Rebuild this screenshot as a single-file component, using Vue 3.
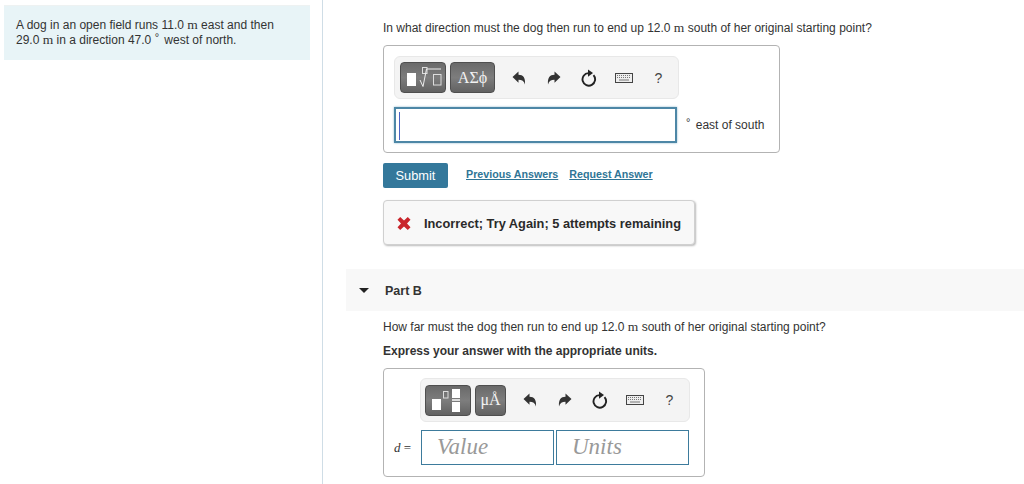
<script setup>
const iconBtns = ['undo', 'redo', 'reset', 'keyboard', 'help']
</script>

<template>
  <div class="page">
    <aside class="side">
      <div class="intro">
        A dog in an open field runs 11.0 <span class="unit">m</span> east and then<br />
        29.0 <span class="unit">m</span> in a direction 47.0 <sup class="deg">°</sup> west of north.
      </div>
    </aside>

    <main class="main">
      <div class="part">
        <p class="question first">
          In what direction must the dog then run to end up 12.0 <span class="unit">m</span> south of her original starting point?
        </p>

        <div class="answer-box box-a">
          <div class="toolbar">
            <button class="tpl tpl-a" aria-label="Templates">
              <svg width="46" height="31" viewBox="0 0 46 31">
                <rect x="7" y="11" width="9" height="13" fill="#fff" />
                <rect x="22.500" y="5.500" width="4.500" height="6" fill="none" stroke="#ddd" stroke-width="1" />
                <path d="M20 18l3 6.500 3.500-17.500h14.500" fill="none" stroke="#eee" stroke-width="1" />
                <rect x="33.500" y="12.500" width="7.500" height="10.500" fill="none" stroke="#ddd" stroke-width="1" />
              </svg>
            </button>
            <button class="tpl tpl-b">ΑΣϕ</button>
            <div class="tools">
              <span v-for="b in iconBtns" :key="b" class="tool">
                <svg v-if="b === 'undo'" width="14" height="14" viewBox="0 0 14 14">
                  <path d="M.5 6L6.500.5v3.300c4.800 0 7 3 6.500 9.700-1-3.400-3-4.800-6.500-4.800v3z" fill="#333" />
                </svg>
                <svg v-else-if="b === 'redo'" width="14" height="14" viewBox="0 0 14 14">
                  <path d="M13.500 6L7.500.5v3.300c-4.800 0-7 3-6.500 9.700 1-3.400 3-4.800 6.500-4.800v3z" fill="#333" />
                </svg>
                <svg v-else-if="b === 'reset'" width="16" height="18" viewBox="0 0 16 18">
                  <path d="M12.500 6.200a6.300 6.300 0 1 1-5-2.100" fill="none" stroke="#222" stroke-width="1.900" />
                  <path d="M7 .5v7.200l5-3.800z" fill="#222" />
                </svg>
                <svg v-else-if="b === 'keyboard'" width="18" height="10" viewBox="0 0 18 10">
                  <rect x="0.500" y="0.500" width="17" height="9" fill="#eee" stroke="#444" />
                  <path d="M2 2.500h14M2 4.500h14" stroke="#777" stroke-dasharray="1 1" />
                  <path d="M4 7h10" stroke="#777" />
                </svg>
                <span v-else class="help">?</span>
              </span>
            </div>
          </div>
          <div class="input-row">
            <div class="math-input"><span class="caret"></span></div>
            <span class="suffix"><sup class="deg">°</sup> east of south</span>
          </div>
        </div>

        <div class="actions">
          <button class="submit">Submit</button>
          <a class="link">Previous Answers</a>
          <a class="link">Request Answer</a>
        </div>

        <div class="feedback">
          <svg width="14" height="13" viewBox="0 0 14 13">
            <path d="M.5 2.800L3.200 0 7 3.600 10.800 0l2.700 2.800L10 6.500l3.500 3.700-2.700 2.800L7 9.400 3.200 13 .5 10.200 4 6.500z" fill="#c9252b" />
          </svg>
          <span>Incorrect; Try Again; 5 attempts remaining</span>
        </div>
      </div>

      <div class="part-head">
        <span class="caret-down"></span>
        <span class="part-title">Part B</span>
      </div>

      <div class="part">
        <p class="question second">
          How far must the dog then run to end up 12.0 <span class="unit">m</span> south of her original starting point?
        </p>
        <p class="hint">Express your answer with the appropriate units.</p>

        <div class="answer-box box-b">
          <div class="toolbar toolbar-b">
            <button class="tpl tpl-a" aria-label="Templates">
              <svg width="46" height="31" viewBox="0 0 46 31">
                <rect x="7" y="14" width="9" height="11" fill="#fff" />
                <rect x="18.500" y="6.500" width="4.500" height="6.500" fill="none" stroke="#ddd" stroke-width="1" />
                <rect x="27" y="4" width="8" height="9" fill="#fff" />
                <rect x="27" y="14" width="8" height="2" fill="#ddd" />
                <rect x="27" y="17" width="8" height="10" fill="#fff" />
              </svg>
            </button>
            <button class="tpl tpl-c">μÅ</button>
            <div class="tools">
              <span v-for="b in iconBtns" :key="b" class="tool">
                <svg v-if="b === 'undo'" width="14" height="14" viewBox="0 0 14 14">
                  <path d="M.5 6L6.500.5v3.300c4.800 0 7 3 6.500 9.700-1-3.400-3-4.800-6.500-4.800v3z" fill="#333" />
                </svg>
                <svg v-else-if="b === 'redo'" width="14" height="14" viewBox="0 0 14 14">
                  <path d="M13.500 6L7.500.5v3.300c-4.800 0-7 3-6.500 9.700 1-3.400 3-4.800 6.500-4.800v3z" fill="#333" />
                </svg>
                <svg v-else-if="b === 'reset'" width="16" height="18" viewBox="0 0 16 18">
                  <path d="M12.500 6.200a6.300 6.300 0 1 1-5-2.100" fill="none" stroke="#222" stroke-width="1.900" />
                  <path d="M7 .5v7.200l5-3.800z" fill="#222" />
                </svg>
                <svg v-else-if="b === 'keyboard'" width="18" height="10" viewBox="0 0 18 10">
                  <rect x="0.500" y="0.500" width="17" height="9" fill="#eee" stroke="#444" />
                  <path d="M2 2.500h14M2 4.500h14" stroke="#777" stroke-dasharray="1 1" />
                  <path d="M4 7h10" stroke="#777" />
                </svg>
                <span v-else class="help">?</span>
              </span>
            </div>
          </div>
          <div class="units-row">
            <span class="var"><i>d</i> =</span>
            <div class="field">Value</div>
            <div class="field">Units</div>
          </div>
        </div>
      </div>
    </main>
  </div>
</template>

<style>
html, body {
  margin: 0;
  background: #fff;
  overflow: hidden;
}
</style>

<style scoped>
.page {
  display: flex;
  width: 1024px;
  height: 484px;
  overflow: hidden;
  font-family: "Liberation Sans", Arial, sans-serif;
  color: #333;
}

.side {
  flex: none;
  box-sizing: border-box;
  width: 323px;
  padding: 5px 0 0 4px;
  border-right: 1px solid #cfdde6;
}

.intro {
  box-sizing: border-box;
  width: 306px;
  height: 55px;
  padding: 12px 12px 0;
  background: #e8f4f7;
  border-top: 1px solid #eef2f2;
  font-size: 12px;
  line-height: 15px;
}

.unit {
  font-family: "Liberation Serif", serif;
  font-size: 13.500px;
  line-height: 0;
}

.deg {
  font-size: 11px;
  line-height: 0;
  vertical-align: 3px;
  margin-right: 2px;
}

.main {
  flex: 1;
  min-width: 0;
  padding-left: 23px;
}

.part {
  padding-left: 37px;
}

.question {
  margin: 0;
  font-size: 12px;
  line-height: 16px;
}

.first {
  padding-top: 20px;
}

.second {
  padding-top: 8px;
}

.hint {
  margin: 8px 0 0;
  font-size: 12px;
  line-height: 16px;
  font-weight: bold;
}

.answer-box {
  box-sizing: border-box;
  border: 1px solid #b3b3b3;
  border-radius: 4px;
  height: 108px;
}

.box-a {
  width: 397px;
  margin-top: 9px;
  padding: 10px 0 0 10px;
}

.box-b {
  width: 322px;
  height: 109px;
  margin-top: 9px;
  padding: 9px 0 0 10px;
}

.toolbar {
  box-sizing: border-box;
  display: flex;
  align-items: center;
  gap: 4px;
  width: 285px;
  height: 43px;
  padding-left: 5px;
  background: #f4f4f4;
  border: 1px solid #e8e8e8;
  border-radius: 6px;
}

.toolbar-b {
  width: 270px;
  height: 44px;
  margin-left: 26px;
  padding-left: 4px;
}

.tpl {
  flex: none;
  height: 31px;
  padding: 0;
  border: 1px solid #4f4f4f;
  border-radius: 4px;
  background: linear-gradient(#6a6a6a, #7d7d7d 50%, #626262);
  color: #f2f2f2;
  font-family: "Liberation Serif", serif;
  font-size: 16px;
  display: flex;
  align-items: center;
  justify-content: center;
}

.tpl svg {
  flex: none;
}

.tpl-a {
  width: 46px;
}

.tpl-b {
  width: 45px;
}

.tpl-c {
  width: 31px;
}

.tools {
  display: flex;
  margin-left: 2px;
}

.tool {
  flex: none;
  display: flex;
  width: 35px;
  height: 24px;
  align-items: center;
  justify-content: center;
}

.help {
  font-size: 14px;
  color: #444;
}

.input-row {
  display: flex;
  align-items: center;
  margin-top: 8px;
}

.math-input {
  box-sizing: border-box;
  width: 283px;
  height: 36px;
  border: 2px solid #4d87a6;
  box-shadow: 0 0 2px #8db8cc;
  padding: 3px;
}

.caret {
  display: block;
  width: 1px;
  height: 28px;
  background: #4a63c4;
}

.suffix {
  margin-left: 9px;
  font-size: 12px;
}

.actions {
  display: flex;
  align-items: center;
  margin-top: 10px;
  height: 25px;
}

.submit {
  width: 65px;
  height: 25px;
  padding: 0;
  border: 0;
  border-radius: 2px;
  background: #34789b;
  color: #fff;
  font: 12.800px "Liberation Sans", Arial, sans-serif;
}

.link {
  margin-left: 11px;
  margin-bottom: 3px;
  color: #2f7596;
  font-size: 10.700px;
  font-weight: bold;
  text-decoration: underline;
}

.submit + .link {
  margin-left: 18px;
}

.feedback {
  box-sizing: border-box;
  display: flex;
  align-items: center;
  gap: 13px;
  width: 312px;
  height: 45px;
  margin-top: 12px;
  padding: 1px 0 0 13px;
  background: #f8f8f8;
  border: 1px solid #d0d0d0;
  border-radius: 4px;
  box-shadow: 1px 1px 2px #bbb;
  font-size: 12.800px;
  font-weight: bold;
  color: #2a2a2a;
}

.part-head {
  display: flex;
  align-items: center;
  height: 42px;
  margin-top: 24px;
  padding: 1px 0 0 13px;
  background: #f8f8f8;
  box-sizing: border-box;
}

.caret-down {
  width: 0;
  height: 0;
  border-left: 5px solid transparent;
  border-right: 5px solid transparent;
  border-top: 5px solid #222;
}

.part-title {
  margin-left: 16px;
  font-size: 12.500px;
  font-weight: bold;
}

.units-row {
  display: flex;
  align-items: center;
  margin-top: 8px;
}

.var {
  width: 27px;
  font-family: "Liberation Serif", serif;
  font-size: 13px;
}

.field {
  box-sizing: border-box;
  width: 133px;
  height: 35px;
  margin-right: 2px;
  padding-left: 15px;
  border: 1px solid #3d7b9c;
  color: #999;
  font-family: "Liberation Serif", serif;
  font-style: italic;
  font-size: 23px;
  line-height: 32px;
}
</style>
